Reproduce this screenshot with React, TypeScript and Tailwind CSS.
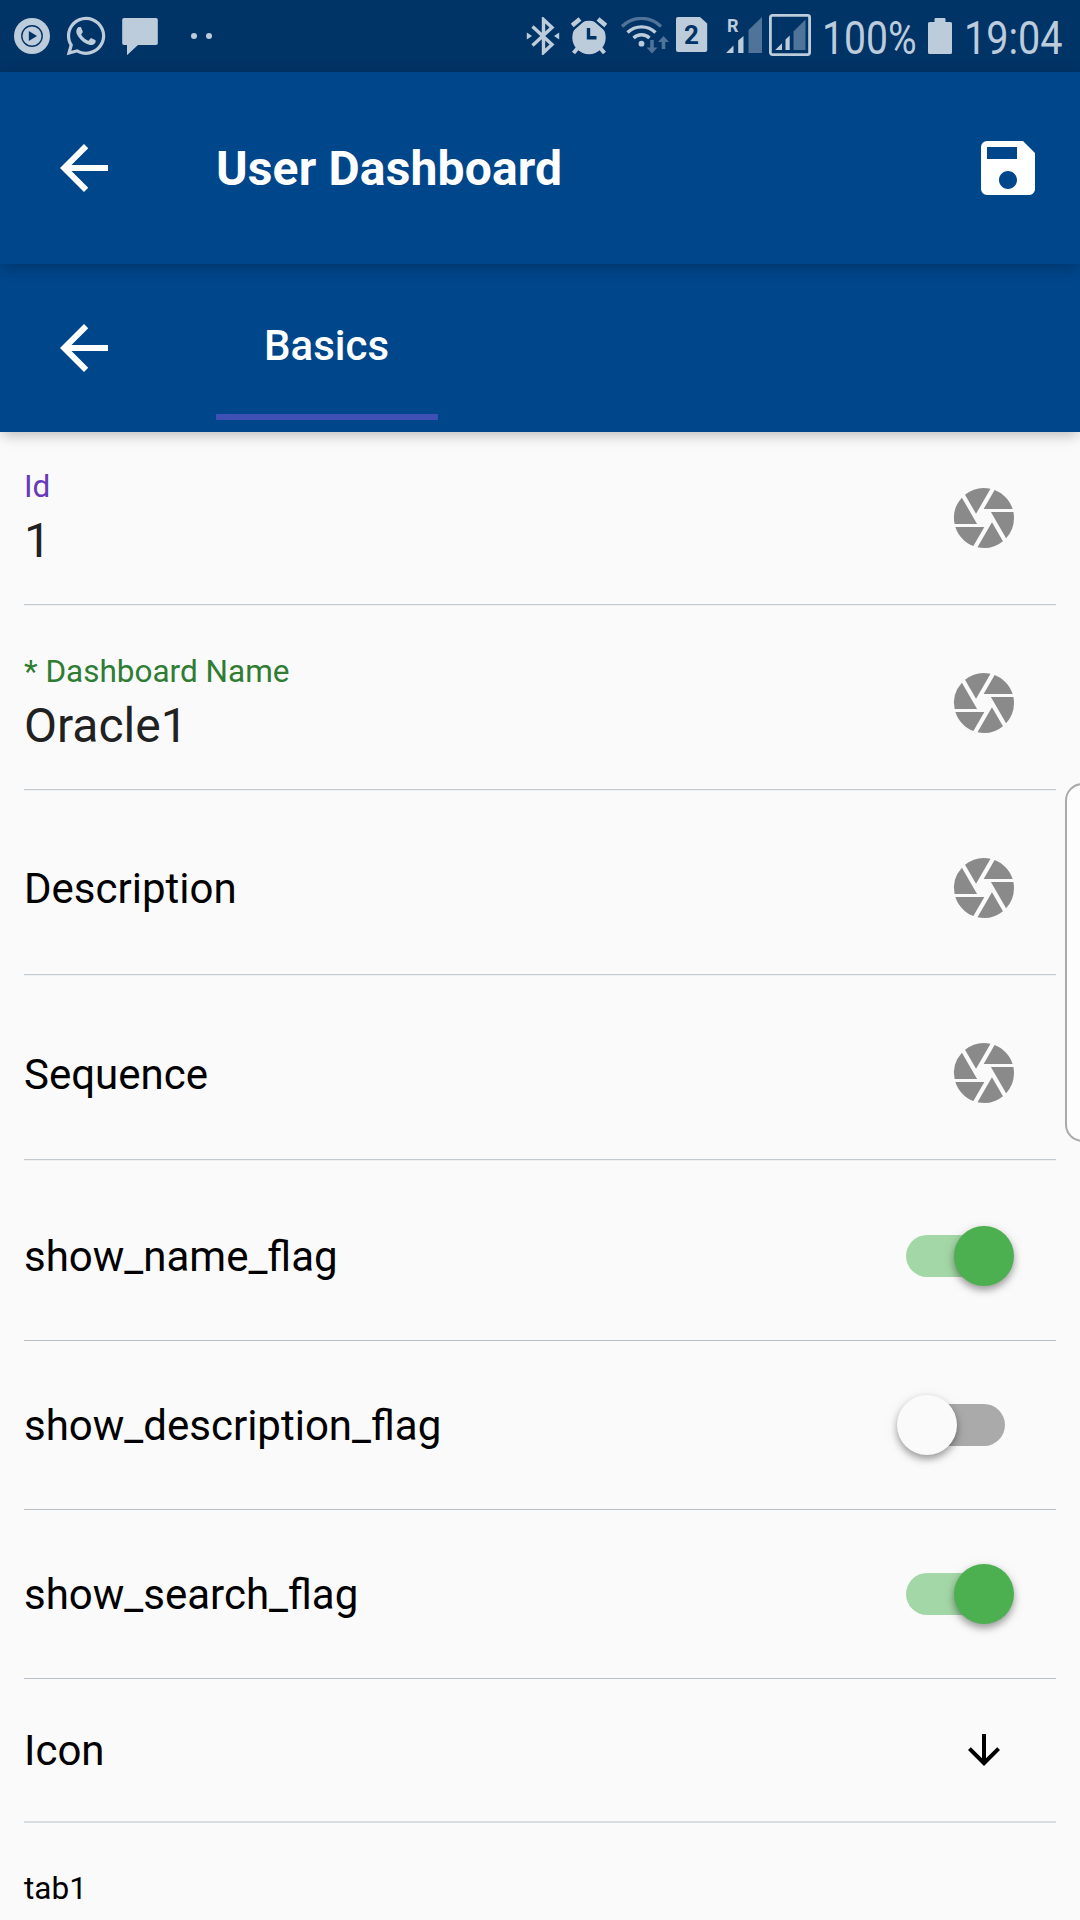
import React from "react";
import { FaWhatsapp } from "react-icons/fa";
import { MdArrowBack, MdArrowDownward, MdCamera, MdSave } from "react-icons/md";

const LIGHT = "#bdccdb";
const DIM = "#4f7399";
const NAVY = "#003366";

function PlayIcon() {
  return (
    <svg width="36" height="36" viewBox="0 0 36 36" className="shrink-0">
      <circle cx="18" cy="18" r="18" fill={LIGHT} />
      <circle cx="18" cy="18" r="10.2" fill="none" stroke={NAVY} strokeWidth="1.4" />
      <path d="M14.8 13l8.2 5-8.2 5z" fill={NAVY} />
    </svg>
  );
}

function MessageIcon() {
  return (
    <svg width="36" height="38" viewBox="0 0 36 38" className="shrink-0">
      <path d="M2 1h32a1.8 1.8 0 0 1 1.8 1.8v23.4A1.8 1.8 0 0 1 34 28H16L5 38.2V28H2a1.8 1.8 0 0 1-1.8-1.8V2.8A1.8 1.8 0 0 1 2 1z" fill={LIGHT} />
    </svg>
  );
}

function BluetoothIcon() {
  return (
    <svg width="34" height="38" viewBox="0 0 34 38" className="shrink-0">
      <path d="M6.5 9.5L26 27.5 17.5 35.5V2.5L26 10.5 6.5 28.5" fill="none" stroke={LIGHT} strokeWidth="3.4" />
      <path d="M.8 15.5l5.2 3.5-5.2 3.5zM33.2 15.5L28 19l5.2 3.5z" fill={LIGHT} />
    </svg>
  );
}

function AlarmIcon() {
  return (
    <svg width="36" height="38" viewBox="0 0 36 38" className="shrink-0">
      <path d="M2.5 36l6-7M33.5 36l-6-7" stroke={LIGHT} strokeWidth="4" />
      <circle cx="18" cy="20.5" r="16.7" fill={LIGHT} />
      <path d="M0 11L12 0.5M36 11L24 0.5" stroke={NAVY} strokeWidth="7" />
      <path d="M1.2 8.5L9 2M34.8 8.5L27 2" stroke={LIGHT} strokeWidth="4.5" />
      <path d="M17.5 11v9.8h8" fill="none" stroke={NAVY} strokeWidth="3.4" />
    </svg>
  );
}

function WifiIcon() {
  return (
    <svg width="50" height="38" viewBox="0 0 50 38" className="shrink-0">
      <g fill="none" strokeWidth="3.3">
        <path d="M2 9.5a27.5 27.5 0 0 1 39 0" stroke={DIM} />
        <path d="M7.5 15.5a20 20 0 0 1 28 0" stroke={LIGHT} />
        <path d="M13.5 21a11.5 11.5 0 0 1 16 0" stroke={LIGHT} />
        <path d="M32 23v10M43.5 32V22" stroke={DIM} strokeWidth="3.6" />
      </g>
      <circle cx="21.5" cy="26.7" r="2.9" fill={LIGHT} />
      <path d="M26.5 30.5h11L32 36.5zM38 25h11l-5.5-6z" fill={DIM} />
    </svg>
  );
}

function SimIcon() {
  return (
    <div className="relative h-[35px] w-8 shrink-0">
      <svg width="32" height="35" viewBox="0 0 32 35">
        <path d="M2 0h22l7.200 6.5V33a2 2 0 0 1-2 2H2a2 2 0 0 1-2-2V2a2 2 0 0 1 2-2z" fill={LIGHT} />
      </svg>
      <span className="absolute inset-y-0 left-0 w-[31px] text-center text-[26px] font-bold leading-[36px] text-[#003366]">2</span>
    </div>
  );
}

function RoamingSignal() {
  return (
    <div className="relative h-9 w-9 shrink-0">
      <svg width="36" height="36" viewBox="0 0 36 36">
        <path d="M0 36h7.5v-7.5zM12.2 36V23.5l5.3-4.5v17z" fill={LIGHT} />
        <path d="M22.5 36V13L36 0v36z" fill={DIM} />
      </svg>
      <span className="absolute left-px top-0 text-[18px] font-bold leading-[18px] text-[#bdccdb]">R</span>
    </div>
  );
}

function BoxedSignal() {
  return (
    <svg width="42" height="42" viewBox="0 0 42 42" className="shrink-0">
      <rect x="1.4" y="1.4" width="39.2" height="39.2" rx="2" fill="none" stroke={LIGHT} strokeWidth="2.8" />
      <path d="M6.2 36h6.8v-6.8zM16.5 36V25.5l4.2-4v14.5z" fill={LIGHT} />
      <path d="M24.5 36V17.5l12-12V36z" fill={DIM} />
    </svg>
  );
}

function BatteryIcon() {
  return (
    <svg width="24" height="36" viewBox="0 0 24 36" className="shrink-0">
      <path d="M7.5 0h9a1 1 0 0 1 1 1v3H22.5a1.5 1.5 0 0 1 1.5 1.5v29a1.5 1.5 0 0 1-1.5 1.5h-21A1.5 1.5 0 0 1 0 34.5v-29A1.5 1.5 0 0 1 1.5 4H6.5V1a1 1 0 0 1 1-1z" fill={LIGHT} />
    </svg>
  );
}

function StatusBar() {
  return (
    <div className="flex h-[72px] items-center bg-[#003366] pl-[14px] text-[#bdccdb]">
      <PlayIcon />
      <FaWhatsapp className="ml-[14px] size-[44px] shrink-0" />
      <div className="ml-[14px]">
        <MessageIcon />
      </div>
      <div className="ml-[33px] flex gap-[9px]">
        <span className="size-[6px] rounded-full bg-[#bdccdb]" />
        <span className="size-[6px] rounded-full bg-[#bdccdb]" />
      </div>
      <div className="ml-auto flex items-center">
        <BluetoothIcon />
        <div className="ml-[11px]">
          <AlarmIcon />
        </div>
        <div className="ml-[13px]">
          <WifiIcon />
        </div>
        <div className="ml-[6px] mt-[-3px]">
          <SimIcon />
        </div>
        <div className="ml-[18px] mt-[-2px]">
          <RoamingSignal />
        </div>
        <div className="ml-[7px] mt-[-2px]">
          <BoxedSignal />
        </div>
        <div className="ml-[11px] mt-[3px] w-[95px] whitespace-nowrap text-[46px] leading-[56px]">
          <span className="inline-block origin-left scale-x-[0.85]">100%</span>
        </div>
        <div className="ml-[11px]">
          <BatteryIcon />
        </div>
        <div className="ml-[12px] mt-[3px] w-[116px] whitespace-nowrap text-[46px] leading-[56px]">
          <span className="inline-block origin-left scale-x-[0.86]">19:04</span>
        </div>
      </div>
    </div>
  );
}

const barShadow = "shadow-[0_6px_12px_-3px_rgba(0,0,0,0.2),0_3px_18px_0_rgba(0,0,0,0.07)]";

function AppBar() {
  return (
    <header className={"relative z-20 flex h-48 items-center bg-[#00468b] px-9 pl-12 text-white " + barShadow}>
      <MdArrowBack className="size-[72px]" />
      <h1 className="ml-24 pt-0.5 text-[48px] font-bold leading-[56px] tracking-[0.15px]">User Dashboard</h1>
      <MdSave className="ml-auto size-[72px]" />
    </header>
  );
}

function TabBar() {
  return (
    <nav className={"relative z-10 flex h-[168px] items-center bg-[#00468b] pl-12 text-white " + barShadow}>
      <MdArrowBack className="size-[72px]" />
      <div className="ml-24 flex h-[144px] w-[222px] flex-col items-center justify-center border-b-[6px] border-[#3f51b5] text-[42px] font-medium leading-[50px]">
        <span className="mr-px mt-0.5">Basics</span>
      </div>
    </nav>
  );
}

function Divider({ soft }: { soft?: boolean }) {
  return soft ? (
    <div className="h-0.5 bg-[#d8dde1]" />
  ) : (
    <div className="mb-[-1px] h-0.5 border-b border-t border-b-[#edf1f4] border-t-[#c2c9cf]" />
  );
}

type FieldRowProps = { label: string; value?: string; tone?: string; nudge?: string };

function FieldRow({ label, value, tone, nudge = "pt-0.5" }: FieldRowProps) {
  return (
    <section>
      <div className="mt-3 flex h-[172px] items-center justify-between pr-9">
        {value ? (
          <div className="flex flex-col">
            <span className={"text-[31.5px] leading-[37px] " + tone}>{label}</span>
            <span className="mt-2 text-[48px] leading-[56px] text-[#212121]">{value}</span>
          </div>
        ) : (
          <span className={"text-[42px] leading-[50px] text-black " + nudge}>{label}</span>
        )}
        <MdCamera className="size-[72px] text-[#8a8a8a]" />
      </div>
      <Divider />
    </section>
  );
}

function Toggle({ on }: { on: boolean }) {
  return (
    <div className={"relative h-[42px] w-[99px] rounded-full " + (on ? "bg-[#a4d7a7]" : "bg-[#aaaaaa]")}>
      <span
        className={
          "absolute -top-[9px] size-[60px] rounded-full shadow-[0_4px_7px_0_rgba(0,0,0,0.32),0_3px_14px_0_rgba(0,0,0,0.1)] " +
          (on ? "left-[48px] bg-[#4caf50]" : "-left-[9px] bg-[#fafafa]")
        }
      />
    </div>
  );
}

function SwitchRow({ label, on }: { label: string; on: boolean }) {
  return (
    <section className="border-b border-[#b8bec6]">
      <div className="flex h-[168px] items-center justify-between pr-[51px]">
        <span className="pt-0.5 text-[42px] leading-[50px] text-black">{label}</span>
        <Toggle on={on} />
      </div>
    </section>
  );
}

export default function App() {
  return (
    <div className="relative flex h-[1920px] w-[1080px] flex-col overflow-hidden bg-[#fafafa] font-[Roboto,sans-serif]">
      <StatusBar />
      <AppBar />
      <TabBar />
      <main className="-mt-3 flex flex-col px-6">
        <FieldRow label="Id" value="1" tone="text-[#673ab7]" />
        <FieldRow label="* Dashboard Name" value="Oracle1" tone="text-[#2e7d32]" />
        <FieldRow label="Description" />
        <FieldRow label="Sequence" nudge="pt-1" />
        <div className="h-3" />
        <SwitchRow label="show_name_flag" on />
        <SwitchRow label="show_description_flag" on={false} />
        <SwitchRow label="show_search_flag" on />
        <section>
          <div className="flex h-[142px] items-center justify-between pr-12">
            <span className="pt-0.5 text-[42px] leading-[50px] text-black">Icon</span>
            <MdArrowDownward className="size-12 text-black" />
          </div>
          <Divider soft />
        </section>
        <span className="mt-[47px] text-[31.5px] leading-[37px] text-black">tab1</span>
      </main>
      <div className="absolute -right-5 top-[783px] h-[359px] w-[35px] rounded-[18px] border-2 border-[#aaaaaa] bg-[#fdfdfd]" />
    </div>
  );
}
